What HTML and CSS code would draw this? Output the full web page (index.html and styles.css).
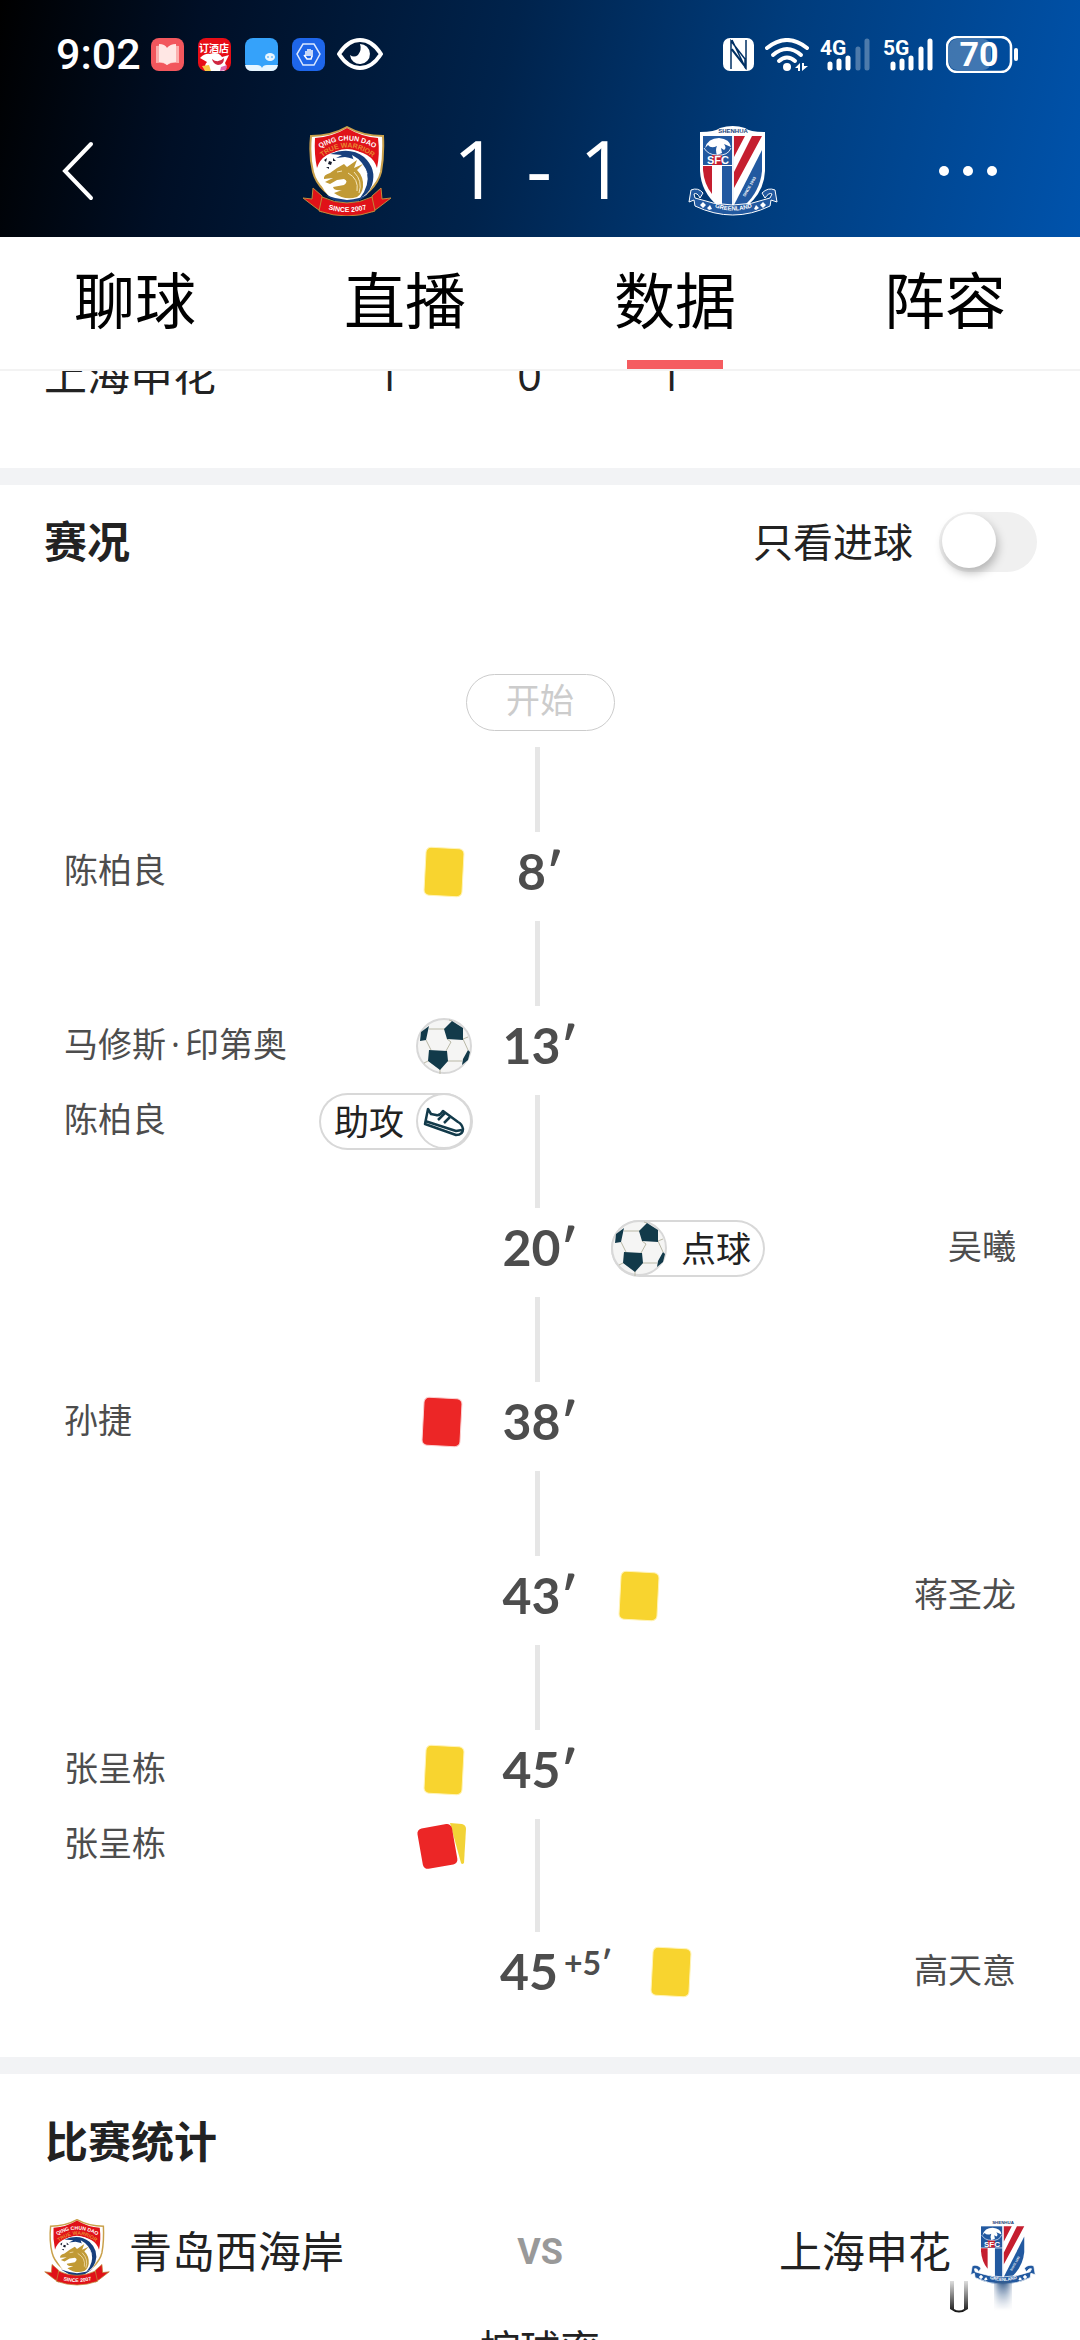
FILE: index.html
```html
<!DOCTYPE html>
<html lang="zh-CN">
<head>
  <meta charset="utf-8">
  <meta name="viewport" content="width=device-width, initial-scale=1">
  <title>比赛数据</title>
  <link rel="stylesheet" href="styles.css">
</head>
<body>
  <!-- shared drawings -->
  <svg class="defs" aria-hidden="true">
    <defs>
      <path id="arcTop" d="M17 23Q45 6 74 23"/>
      <path id="arcSub" d="M18 33Q45 10 73 33"/>
      <path id="arcSince" d="M22 82Q45 90 69 82"/>
      <path id="arcGreen" d="M26 81Q45 88 65 81"/>
    </defs>
    <symbol id="qingdao" viewBox="0 0 90 90">
      <path d="M11 62L20 70V86L14 82L1 72L10 73Z" fill="#e01219" stroke="#c08a3a" stroke-width="1"/>
      <path d="M79 62L70 70V86L76 82L89 72L80 73Z" fill="#e01219" stroke="#c08a3a" stroke-width="1"/>
      <path d="M45 1Q61 10 81 10Q82 30 79 46Q74 66 45 79Q16 66 11 46Q7 30 9 10Q29 10 45 1Z" fill="#fff" stroke="#c9a04a" stroke-width="2"/>
      <path d="M45 2Q60 11 76 12Q78 28 75 42Q70 25 45 24Q20 25 15 42Q12 28 13 12Q30 11 45 2Z" fill="#e01219"/>
      <circle cx="45" cy="50" r="27" fill="#fff"/>
      <path d="M28 28Q48 20 62 31Q75 43 70 59Q66 69 58 72Q68 59 65 47Q59 33 43 31L34 32L40 29Z" fill="#173f7d"/>
      <path d="M50 29Q62 35 66 49Q61 39 52 35Z" fill="#fff"/>
      <path d="M23 69Q34 73 45 74Q58 73 67 68Q58 75 45 80Q32 75 23 69Z" fill="#173f7d"/>
      <path d="M45 41L55 34L52 42L61 38L55 44Q62 51 61 61Q60 68 55 71Q43 75 32 67L40 64Q32 65 31 61L42 59Q47 55 42 53L35 54L28 58L23 56L31 52L22 53Q21 49 28 47L35 42L42 38Z" fill="#c19a35"/>
      <path d="M46 47Q57 53 55 65M52 46Q61 55 57 67M35 46L40 45" fill="none" stroke="#f5e7bd" stroke-width="1"/>
      <circle cx="28" cy="37" r="6" fill="#fff"/>
      <path d="M27 35L30 36L29 39L26 38ZM22 34L25 32L24 36ZM31 32L34 35L31 35ZM24 41L27 41L27 43Z" fill="#15192a"/>
      <path d="M20 71Q45 83 70 71L73 85Q45 95 17 85Z" fill="#e01219" stroke="#c08a3a" stroke-width="1"/>
      <text class="crest-a"><textPath href="#arcTop" startOffset="50%" text-anchor="middle">QING CHUN DAO</textPath></text>
      <text class="crest-b"><textPath href="#arcSub" startOffset="50%" text-anchor="middle">TRUE WARRIOR</textPath></text>
      <text class="crest-a"><textPath href="#arcSince" startOffset="50%" text-anchor="middle">SINCE 2007</textPath></text>
    </symbol>
    <symbol id="shenhua" viewBox="0 0 90 90">
      <path d="M12 6Q27 6 32 2Q45 -2 57 2Q62 6 77 6V45Q76 66 59 80H30Q13 66 12 45Z" fill="#fff"/>
      <path d="M15 10H44V39H15Z" fill="#2259a0"/>
      <path d="M15 40H24V68Q16 58 15 44Z" fill="#c51e2f"/>
      <path d="M34 40H44V80H34Z" fill="#2259a0"/>
      <path d="M24 29H34V39H24Z" fill="#c51e2f"/>
      <path d="M46 10H57L46 31ZM64 10H74L46 62V46Z" fill="#c51e2f"/>
      <path d="M74 24V45Q72 65 57 79H46Z" fill="#2259a0"/>
      <path d="M17 22Q20 12 31 12Q42 13 43 21L36 18Q39 22 36 24L33 22L34 27L29 29Q27 24 29 20Q23 23 20 19Z" fill="#fff"/>
      <path d="M16 22Q20 29 29 29Q40 30 43 22M45 10V78" fill="none" stroke="#dfe8f5" stroke-width="1"/>
      <path d="M1 76L3 64Q10 61 15 67L12 72Q9 66 6 68L7 72Q45 86 82 72L84 68Q81 66 77 72L74 67Q80 61 87 64L89 76L83 74L82 80Q45 98 7 80L6 74Z" fill="#2259a0" stroke="#fff" stroke-width="1"/>
      <path d="M12 79L15 76L18 79L15 82ZM19 82L22 79L24 83L21 84ZM72 79L75 76L78 79L75 82ZM66 83L68 79L71 82L68 84Z" fill="#fff"/>
      <text class="crest-c" x="45" y="7" text-anchor="middle">SHENHUA</text>
      <text class="crest-d" x="30" y="38" text-anchor="middle">SFC</text>
      <text class="crest-e"><textPath href="#arcGreen" startOffset="50%" text-anchor="middle">GREENLAND</textPath></text>
      <text class="crest-f" x="57" y="71" transform="rotate(-60 57 71)">SINCE 1993</text>
    </symbol>
    <symbol id="ball" viewBox="0 0 57 57">
      <circle cx="28" cy="28" r="27" fill="#f5f5f4" stroke="#d8d8d8" stroke-width="2"/>
      <path d="M13 11H29M10 22L15 32M31 21L35 24L30 33M47 21L52 32M31 43H46M12 43L8 45M24 51V56M36 3L33 2M47 21L52 19" fill="none" stroke="#b9b8a6" stroke-width="1"/>
      <path d="M36 3L47 10V22L31 21L28 11ZM13 32L31 33L32 43L24 52L12 43ZM5 14L13 8L10 22L4 23ZM52 32L54 34L52 42L46 47L47 41Z" fill="#123a4a"/>
    </symbol>
    <symbol id="yellow" viewBox="0 0 57 57">
      <rect x="9" y="4" width="38" height="48" rx="5" fill="#f8d42f" stroke="#fff3b8" stroke-width="1" transform="rotate(3 28 28)"/>
    </symbol>
    <symbol id="red" viewBox="0 0 57 57">
      <rect x="7" y="4" width="38" height="48" rx="5" fill="#ec2626" stroke="#fbd0d0" stroke-width="1" transform="rotate(3 26 28)"/>
    </symbol>
    <symbol id="second" viewBox="0 0 57 57">
      <path d="M34 6L46 7Q50 8 50 12L48 46Q46 48 45 46Z" fill="#f2d337"/>
      <rect x="4" y="9" width="35" height="41" rx="5" fill="#ec2626" transform="rotate(-10 21 30)"/>
    </symbol>
  </svg>

  <header class="top">
    <div class="status">
      <div class="status-left">
        <span class="clock">9:02</span>
        <svg class="app" viewBox="0 0 33 33"><rect width="33" height="33" rx="8" fill="#f2575d"/><path d="M5 8Q12 7 16 10Q20 7 28 8V25Q20 24 16 27Q12 24 5 25Z" fill="#fbb0ae"/><path d="M8 6Q14 6 16 10Q19 6 25 6V24Q19 24 16 27Q13 24 8 24Z" fill="#ffe7e4"/></svg>
        <svg class="app" viewBox="0 0 33 33"><rect width="33" height="33" rx="8" fill="#e70d16"/><text x="16" y="14" text-anchor="middle" class="app-text">订酒店</text><path d="M2 20Q7 15 12 16Q20 13 24 19L31 17L27 25Q30 30 26 33H9Q5 28 9 24Z" fill="#fff"/><path d="M14 21Q20 26 26 20Q26 27 20 27Q15 26 14 21Z" fill="#cf2741"/><path d="M4 28L11 27L13 33H7Z" fill="#f8c742"/><path d="M23 29L29 27L28 32L22 33Z" fill="#e066b0"/></svg>
        <svg class="app" viewBox="0 0 33 33"><rect width="33" height="33" rx="8" fill="#35a2fa"/><path d="M0 27H12Q16 27 17 30Q18 27 22 27H33Q32 33 26 33H7Q1 33 0 27Z" fill="#e8f6ff"/><ellipse cx="25" cy="19" rx="5" ry="4" fill="#e8f6ff"/><path d="M23 18V20M27 18V20" stroke="#35a2fa"/></svg>
        <svg class="app" viewBox="0 0 33 33"><rect width="33" height="33" rx="8" fill="#1e66ea"/><path d="M11 6H22L28 16L22 27H11L5 16Z" fill="none" stroke="#dce9ff" stroke-width="1.5"/><path d="M14 13V18M16 11V18M18 11V18M20 12V19M12 17L15 21H19L20 18" fill="none" stroke="#fff" stroke-width="1.5"/></svg>
        <svg class="eye" viewBox="0 0 46 33"><path d="M2 16Q11 2 23 2Q35 2 44 16Q35 30 23 30Q11 30 2 16Z" fill="none" stroke="#fff" stroke-width="4" stroke-linejoin="round"/><path d="M23 6A10 10 0 1 1 13 17Q17 20 21 17Q25 12 23 6Z" fill="#fff"/></svg>
      </div>
      <div class="status-right">
        <svg class="nfc" viewBox="0 0 31 33"><rect width="31" height="33" rx="7" fill="#fff"/><path d="M8 31V3L22 21V30M9 2L23 31M9 11L22 28M23 2V30L9 12" fill="none" stroke="#003064" stroke-width="1.5"/></svg>
        <svg class="wifi" viewBox="0 0 44 33"><g fill="none" stroke="#fff" stroke-width="4" stroke-linecap="round"><path d="M2 10Q22 -6 42 10"/><path d="M8 17Q22 5 36 17"/><path d="M14 23Q22 16 30 23"/></g><circle cx="22" cy="29" r="4" fill="#fff"/><path d="M30 30L35 25V33H33V30ZM37 25V33L43 28H39V25Z" fill="#fff"/></svg>
        <svg class="signal" viewBox="0 0 52 33"><text x="0" y="17" class="net">4G</text><g stroke="#fff" stroke-width="5" stroke-linecap="round"><path d="M10 26V30M19 23V30M28 20V30"/><path opacity=".3" d="M38 11V30M47 3V30"/></g></svg>
        <svg class="signal" viewBox="0 0 52 33"><text x="0" y="17" class="net">5G</text><path d="M10 26V30M19 23V30M28 20V30M38 11V30M47 3V30" stroke="#fff" stroke-width="5" stroke-linecap="round"/></svg>
        <svg class="battery" viewBox="0 0 74 37"><rect x="3" y="3" width="42" height="31" rx="8" fill="#fff" opacity=".25"/><rect x="1" y="1" width="64" height="35" rx="10" fill="none" stroke="#fff" stroke-width="2.5"/><path d="M70 14V23" stroke="#fff" stroke-width="4" stroke-linecap="round"/><text x="33" y="30" text-anchor="middle" class="charge">70</text></svg>
      </div>
    </div>
    <div class="match">
      <button class="icon-btn" type="button" aria-label="返回">
        <svg class="back" viewBox="0 0 32 60"><path d="M29 3L3 30L29 57" fill="none" stroke="#fff" stroke-width="4" stroke-linecap="round"/></svg>
      </button>
      <div class="score">
        <svg class="crest"><use href="#qingdao"/></svg>
        <div class="result"><span>1</span><span>-</span><span>1</span></div>
        <svg class="crest"><use href="#shenhua"/></svg>
      </div>
      <button class="icon-btn icon-btn-more" type="button" aria-label="更多">
        <svg class="more" viewBox="0 0 60 12"><g fill="#fff"><circle cx="6" cy="6" r="5"/><circle cx="30" cy="6" r="5"/><circle cx="54" cy="6" r="5"/></g></svg>
      </button>
    </div>
  </header>

  <nav class="tabs">
    <a href="#chat">聊球</a>
    <a href="#live">直播</a>
    <a href="#data" class="active">数据</a>
    <a href="#lineup">阵容</a>
  </nav>

  <main class="scroll">
    <section class="halves">
      <table>
        <tr><th scope="row">上海申花</th><td>1</td><td>0</td><td>1</td><td></td></tr>
      </table>
    </section>

    <section class="panel">
      <div class="panel-head">
        <h2>赛况</h2>
        <label class="goals-only">只看进球 <input type="checkbox" class="toggle"></label>
      </div>
      <div class="start">开始</div>
      <div class="line start-line"></div>
      <ol class="timeline">
        <li>
          <div class="side home">
            <div class="entry"><span>陈柏良</span><svg class="mark"><use href="#yellow"/></svg></div>
          </div>
          <div class="mid"><time>8′</time><div class="line"></div></div>
        </li>
        <li>
          <div class="side home">
            <div class="entry"><span>马修斯<i class="dot">·</i>印第奥</span><svg class="mark"><use href="#ball"/></svg></div>
            <div class="entry"><span>陈柏良</span>
              <div class="tag tag-assist">助攻<svg class="mark" viewBox="0 0 57 57"><circle cx="28" cy="28" r="27" fill="#fff" stroke="#d8d8d8" stroke-width="2"/><g fill="none" stroke="#123a4a" stroke-width="2.5" stroke-linejoin="round"><path d="M12 16L9 31L40 42Q47 42 47 36Q46 31 42 29L27 18Q24 23 20 22L15 21Z"/><path d="M9 28L40 38L46 37M22 27L29 20M28 30L34 24"/></g></svg></div>
            </div>
          </div>
          <div class="mid"><time>13′</time><div class="line"></div></div>
        </li>
        <li>
          <div class="side home"></div>
          <div class="mid"><time>20′</time><div class="line"></div></div>
          <div class="side away">
            <div class="entry"><div class="tag tag-penalty"><svg class="mark"><use href="#ball"/></svg>点球</div><span>吴曦</span></div>
          </div>
        </li>
        <li>
          <div class="side home">
            <div class="entry"><span>孙捷</span><svg class="mark"><use href="#red"/></svg></div>
          </div>
          <div class="mid"><time>38′</time><div class="line"></div></div>
        </li>
        <li>
          <div class="side home"></div>
          <div class="mid"><time>43′</time><div class="line"></div></div>
          <div class="side away">
            <div class="entry"><svg class="mark"><use href="#yellow"/></svg><span>蒋圣龙</span></div>
          </div>
        </li>
        <li>
          <div class="side home">
            <div class="entry"><span>张呈栋</span><svg class="mark"><use href="#yellow"/></svg></div>
            <div class="entry"><span>张呈栋</span><svg class="mark"><use href="#second"/></svg></div>
          </div>
          <div class="mid"><time>45′</time><div class="line"></div></div>
        </li>
        <li class="last">
          <div class="side home"></div>
          <div class="mid"><time>45<sup>+5′</sup></time></div>
          <div class="side away">
            <div class="entry"><svg class="mark"><use href="#yellow"/></svg><span>高天意</span></div>
          </div>
        </li>
      </ol>
    </section>

    <section class="panel stats">
      <h2>比赛统计</h2>
      <div class="teams">
        <div class="team"><svg class="small-crest"><use href="#qingdao"/></svg>青岛西海岸</div>
        <span class="vs">VS</span>
        <div class="team team-away">上海申花<svg class="small-crest"><use href="#shenhua"/></svg>
          <svg class="smear" viewBox="0 0 176 34" aria-hidden="true">
            <defs>
              <linearGradient id="fadeDown" x2="0" y2="1"><stop offset="0" stop-color="#222" stop-opacity=".15"/><stop offset="1" stop-color="#111"/></linearGradient>
              <linearGradient id="fadeBlue" x2="0" y2="1"><stop offset="0" stop-color="#31588a"/><stop offset="1" stop-color="#a8b8cc" stop-opacity=".1"/></linearGradient>
              <filter id="soft"><feGaussianBlur stdDeviation="3 1"/></filter>
            </defs>
            <rect x="116" y="0" width="14" height="28" fill="url(#fadeBlue)" filter="url(#soft)"/>
            <path d="M70 0H74V28Q79 31 84 28V0H88V28Q79 35 70 28Z" fill="url(#fadeDown)"/>
          </svg>
        </div>
      </div>
      <div class="stat-name">控球率</div>
    </section>
  </main>
</body>
</html>
```
FILE: styles.css
```css
* {
  box-sizing: border-box;
}
body {
  margin: 0;
  height: 100vh;
  overflow: hidden;
  display: flex;
  flex-direction: column;
  background: #fff;
  color: #222;
  font-family: "Open Sans", "Noto Sans CJK SC", sans-serif;
}
h2 {
  margin: 0;
  font-size: 43px;
  line-height: 60px;
  font-weight: 700;
}
svg {
  display: block;
  flex: none;
}
.defs {
  position: absolute;
  width: 0;
  height: 0;
}

/* ============================================================
  HEADER
============================================================ */
.top {
  flex: none;
  height: 237px;
  color: #fff;
  background: linear-gradient(102deg, #000 0%, #000f26 18%, #00234c 46%, #003c7c 70%, #0053ac 100%);
}
.status {
  display: flex;
  justify-content: space-between;
  align-items: center;
  height: 108px;
  padding: 0 60px 0 56px;
}
.status-left {
  display: flex;
  align-items: center;
  gap: 14px;
}
.status-right {
  display: flex;
  align-items: center;
  gap: 11px;
}
.clock {
  font-family: Roboto, sans-serif;
  font-weight: 500;
  font-size: 43px;
  line-height: 44px;
  margin-right: -4px;
}
.app {
  width: 33px;
  height: 33px;
}
.app-text {
  font-size: 10px;
  font-weight: 700;
  fill: #fff;
}
.eye {
  width: 46px;
  height: 33px;
  margin-left: -2px;
}
.nfc {
  width: 31px;
  height: 33px;
}
.wifi {
  width: 44px;
  height: 33px;
}
.signal {
  width: 52px;
  height: 33px;
}
.net {
  font: 700 21px Roboto, sans-serif;
  fill: #fff;
}
.battery {
  width: 74px;
  height: 37px;
}
.charge {
  font: 700 34px Roboto, sans-serif;
  fill: #fff;
}
.match {
  display: flex;
  justify-content: space-between;
  align-items: center;
  height: 126px;
  padding: 0 62px;
}
.icon-btn {
  display: flex;
  align-items: center;
  width: 80px;
  height: 80px;
  padding: 0;
  border: 0;
  background: none;
}
.icon-btn-more {
  padding-right: 20px;
}
.back {
  width: 32px;
  height: 60px;
}
.more {
  width: 60px;
  height: 12px;
}
.score {
  display: flex;
  align-items: center;
}
.crest {
  width: 90px;
  height: 90px;
}
.result {
  display: flex;
  justify-content: space-between;
  width: 172px;
  margin: 0 63px 0 61px;
  font-size: 80px;
  line-height: 80px;
  padding-bottom: 6px;
}
.crest-a, .crest-b, .crest-c, .crest-d, .crest-e, .crest-f {
  font-family: "Liberation Sans", sans-serif;
  font-weight: 700;
  fill: #fff;
}
.crest-a {
  font-size: 7px;
}
.crest-b {
  font-size: 7px;
  fill: #e8892f;
}
.crest-c {
  font-size: 6px;
  fill: #1c3f78;
}
.crest-d {
  font-size: 11px;
}
.crest-e {
  font-size: 6px;
}
.crest-f {
  font-size: 4px;
}

/* ============================================================
  TABS
============================================================ */
.tabs {
  flex: none;
  display: flex;
  height: 134px;
  border-bottom: 2px solid #f3f3f3;
}
.tabs a {
  flex: 1;
  display: flex;
  flex-direction: column;
  align-items: center;
  justify-content: space-between;
  padding-top: 20px;
  color: #000;
  font-size: 61px;
  line-height: 88px;
  text-decoration: none;
}
.tabs a.active:after {
  content: "";
  width: 96px;
  height: 9px;
  background: #f55c60;
}

/* ============================================================
  CONTENT
============================================================ */
.scroll {
  flex: 1;
  min-height: 0;
  overflow: hidden;
}
.halves {
  /* row sits half under the tab bar */
  margin-top: -26px;
  padding-bottom: 63px;
}
.halves table {
  width: 100%;
  table-layout: fixed;
  border-collapse: collapse;
  font-size: 43px;
  line-height: 60px;
}
.halves th {
  width: 318px;
  padding: 0 0 0 44px;
  text-align: left;
  font-weight: 400;
}
.halves td {
  width: 141px;
  padding: 0;
  text-align: center;
}
.halves td:last-child {
  width: auto;
}
.panel {
  border-top: 17px solid #f2f3f5;
}
.panel-head {
  display: flex;
  justify-content: space-between;
  align-items: center;
  height: 114px;
  padding: 0 43px 0 44px;
}
.goals-only {
  display: flex;
  align-items: center;
  gap: 26px;
  font-size: 40px;
  line-height: 60px;
}
.toggle {
  appearance: none;
  width: 98px;
  height: 60px;
  margin: 0;
  padding: 2px 3px;
  border-radius: 30px;
  background: #f0f0f0;
}
.toggle:before {
  content: "";
  display: block;
  width: 54px;
  height: 54px;
  border-radius: 50%;
  background: #fff;
  box-shadow: 2px 5px 10px rgba(0, 0, 0, 0.25);
}
.toggle:checked {
  background: #f55c60;
}
.toggle:checked:before {
  margin-left: auto;
}
.start {
  width: 149px;
  height: 57px;
  margin: 75px auto 16px;
  border: 1px solid #ccc;
  border-radius: 29px;
  color: #ccc;
  font-size: 34px;
  line-height: 50px;
  text-align: center;
}
.line {
  width: 5px;
  background: #e6e6e6;
}
.start-line {
  height: 85px;
  margin-left: calc(50% - 5px);
}

/* timeline */
.timeline {
  margin: 0;
  padding: 0;
  list-style: none;
}
.timeline li {
  display: grid;
  grid-template-columns: calc(50% - 40px) auto 1fr;
  min-height: 174px;
}
.timeline li.last {
  min-height: 125px;
}
.side {
  padding-top: 3px;
}
.home {
  padding-left: 64px;
  padding-right: 27px;
  padding-bottom: 49px;
}
.last .home {
  padding-bottom: 0;
}
.away {
  padding-left: 31px;
  padding-right: 64px;
}
.entry {
  display: flex;
  justify-content: space-between;
  align-items: center;
  height: 75px;
  color: #4d4d4d;
  font-size: 34px;
  line-height: 48px;
}
.entry > span {
  padding-bottom: 6px;
}
.dot {
  margin: 0 5px;
  font-style: normal;
}
.mark {
  width: 57px;
  height: 57px;
}
.mid {
  display: flex;
  flex-direction: column;
  min-width: 80px;
}
.mid time {
  height: 80px;
  color: #4d4d4d;
  font-family: Lato, sans-serif;
  font-weight: 700;
  font-size: 50px;
  line-height: 78px;
  text-align: center;
}
.mid sup {
  margin-left: 6px;
  font-size: 32px;
  line-height: 0;
  vertical-align: 15px;
}
.mid .line {
  flex: 1;
  margin: 9px 0 0 35px;
}
.tag {
  display: flex;
  align-items: center;
  justify-content: space-between;
  width: 154px;
  height: 57px;
  border-radius: 29px;
  box-shadow: inset 0 0 0 2px #d8d8d8;
  color: #222;
  font-size: 35px;
}
.tag-assist {
  padding-left: 15px;
}
.tag-penalty {
  padding-right: 14px;
}

/* stats */
.stats {
  padding: 0 44px;
}
.stats h2 {
  padding-left: 1px;
  margin-top: 38px;
}
.teams {
  display: grid;
  grid-template-columns: 1fr auto 1fr;
  align-items: center;
  height: 74px;
  margin-top: 43px;
}
.team {
  display: flex;
  align-items: center;
  gap: 19px;
  font-size: 43px;
  line-height: 60px;
}
.team-away {
  position: relative;
  justify-content: flex-end;
}
.small-crest {
  width: 66px;
  height: 70px;
}
.vs {
  color: #999;
  font-family: Roboto, sans-serif;
  font-weight: 700;
  font-size: 36px;
}
.smear {
  position: absolute;
  right: -20px;
  top: 64px;
  width: 176px;
  height: 34px;
}
.stat-name {
  margin-top: 30px;
  font-size: 40px;
  line-height: 60px;
  text-align: center;
}
```
